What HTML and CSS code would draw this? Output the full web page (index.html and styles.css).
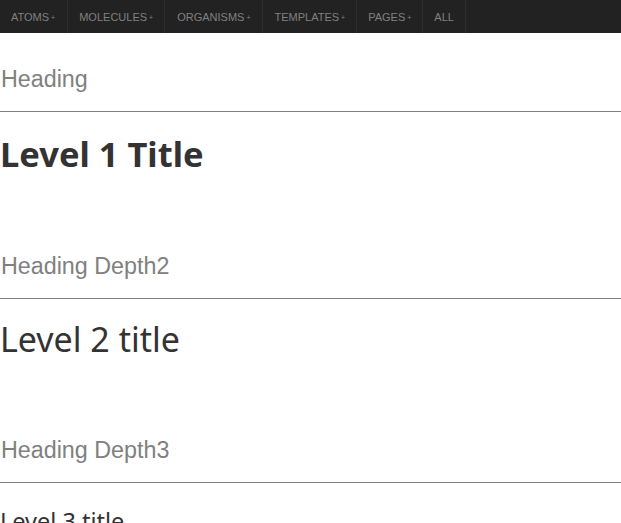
FILE: index.html
```html
<!DOCTYPE html>
<html>
<head>
<meta charset="utf-8">
<link rel="stylesheet" href="styles.css">
</head>
<body>
<nav class="nav">
  <a class="nav-item wide">ATOMS<span class="plus">+</span></a>
  <a class="nav-item">MOLECULES<span class="plus">+</span></a>
  <a class="nav-item wider">ORGANISMS<span class="plus">+</span></a>
  <a class="nav-item">TEMPLATES<span class="plus">+</span></a>
  <a class="nav-item">PAGES<span class="plus">+</span></a>
  <a class="nav-item">ALL</a>
</nav>
<main class="content">
  <section class="block">
    <h2 class="sg-head">Heading</h2>
    <h1 class="title t1">Level 1 Title</h1>
  </section>
  <section class="block">
    <h2 class="sg-head">Heading Depth2</h2>
    <h2 class="title t2">Level 2 title</h2>
  </section>
  <section class="block">
    <h2 class="sg-head">Heading Depth3</h2>
    <h3 class="title t3">Level 3 title</h3>
  </section>
</main>
</body>
</html>
```
FILE: styles.css
```css
html, body {
  margin: 0;
  padding: 0;
  background: #fff;
  overflow: hidden;
}
.nav {
  display: flex;
  height: 33px;
  background: #222;
}
.nav-item {
  display: flex;
  align-items: center;
  padding: 0 11px 0 11px;
  border-right: 1px solid #2f2f2f;
  font-family: "Liberation Sans", Arial, sans-serif;
  font-size: 11px;
  color: #808080;
  text-transform: uppercase;
}
.nav-item.wide {
  padding-right: 12px;
}
.nav-item.wider {
  padding: 0 12px;
}
.plus {
  font-size: 7px;
  margin-left: 2px;
  margin-top: 2px;
}
.content {
  padding: 0;
}
.block {
  display: flex;
  flex-direction: column;
}
.sg-head {
  margin: 0;
  padding: 33px 0 19px 1px;
  font-family: "Liberation Sans", Arial, sans-serif;
  font-weight: normal;
  font-size: 23.3px;
  line-height: 26px;
  color: #808080;
  border-bottom: 1px solid #808080;
}
.title {
  margin: 0;
  font-family: "Noto Sans", "Open Sans", sans-serif;
  color: #333;
}
.t1 {
  font-weight: bold;
  font-size: 34.5px;
  line-height: 52px;
  padding: 16px 0 40px;
}
.t2 {
  font-weight: normal;
  font-size: 34px;
  line-height: 52px;
  padding: 14px 0 39px;
}
.t3 {
  font-weight: normal;
  font-size: 23.5px;
  line-height: 36px;
  padding: 20px 0 30px;
}
```
